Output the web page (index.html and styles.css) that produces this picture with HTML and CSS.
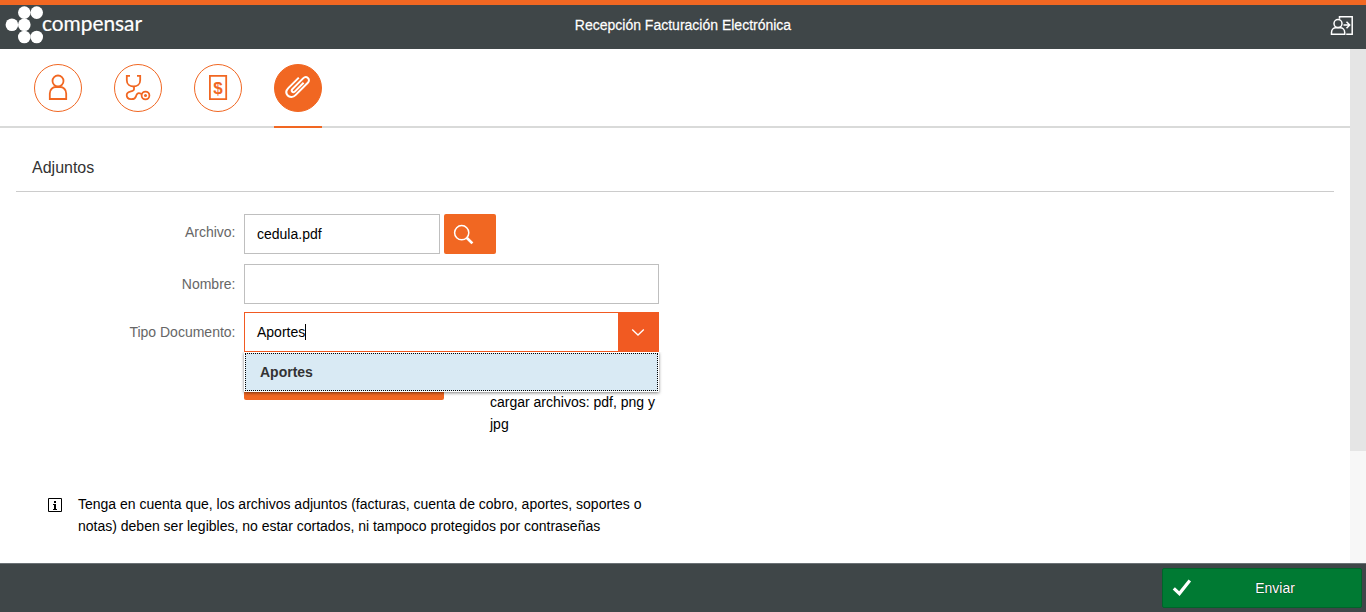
FILE: index.html
```html
<!DOCTYPE html>
<html lang="es">
<head>
<meta charset="utf-8">
<title>Recepción Facturación Electrónica</title>
<link rel="stylesheet" href="styles.css">
</head>
<body>
<header class="header">
  <svg class="logo" width="150" height="44" viewBox="0 5 150 44">
    <g fill="#fff"><circle cx="24.3" cy="12.6" r="6.3"/><circle cx="36.700" cy="12.6" r="6.3"/><circle cx="11.9" cy="24.800" r="6.3"/><circle cx="24.3" cy="24.800" r="6.3"/><circle cx="24.3" cy="37" r="6.3"/><circle cx="36.700" cy="37" r="6.3"/></g>
    <text class="logo-text" x="42" y="30.500" textLength="100" lengthAdjust="spacingAndGlyphs">compensar</text>
  </svg>
  <h1 class="header-title">Recepción Facturación Electrónica</h1>
  <svg class="logout" width="24" height="20" viewBox="0 0 24 20" fill="none" stroke="#fff" stroke-width="1.5">
    <circle cx="8" cy="7.600" r="4"/><path d="M1.500 18.200v-1.700c0-3 2.200-4.800 4.400-4.800h4.400c2.200 0 4.400 1.800 4.400 4.800v1.700z"/><path d="M9.500 2.800V.8h12.700v17.400h-6"/><path d="M13.500 9h6M16.500 5.800L19.700 9l-3.200 3.200"/>
  </svg>
</header>
<div class="viewport">
  <main class="content">
    <nav class="tabs">
      <div class="tab"><svg class="tab-icon" viewBox="1 1 46 46"><circle cx="24" cy="17" r="5.500"/><path d="M15.800 35v-5.500c0-4 3-6.500 6-6.500h4.400c3 0 6 2.500 6 6.500V35z"/></svg></div>
      <div class="tab"><svg class="tab-icon" viewBox="1 1 46 46"><path d="M16 11.800h-3.200v4.500c0 4 3 6.200 6.700 6.200s6.700-2.200 6.700-6.200v-4.500H23"/><path d="M20 22.500v2.700c0 3.200-7.300.8-7.300 5.800 0 5.500 8.300 5.200 9.300 1.200.8-3.200 2.500-3.800 5.500-2.200"/><circle cx="31.500" cy="31.500" r="3.900"/><circle class="solid" cx="31.500" cy="31.500" r="1.500"/></svg></div>
      <div class="tab"><svg class="tab-icon" viewBox="1 1 46 46"><path d="M15.900 11.900h16.300v23.200H15.900z"/><text class="dollar" x="24" y="29.600">$</text></svg></div>
      <div class="tab active"><svg class="tab-icon" viewBox="1 1 46 46"><path d="M24.800 13.600L14.500 23.900c-2.600 2.600-2.600 5.600-.8 7.600s5.400 2 7.800-.4L33.800 18.800c1.600-1.600 1.400-3.700.1-4.800-1.400-1.200-3.400-1-4.800.4L18.500 25c-1 1-.9 2-.2 2.700s1.800.6 2.700-.3l8.600-8.600"/></svg></div>
    </nav>
    <section class="panel">
      <h2 class="panel-title">Adjuntos</h2>
      <div class="form">
        <div class="row">
          <label class="label">Archivo:</label>
          <div class="field file">cedula.pdf</div>
          <button class="search"><svg width="22" height="22" viewBox="0 0 22 22" fill="none" stroke="#fff"><circle cx="8.700" cy="8.700" r="7.100" stroke-width="1.500"/><path d="M13.700 13.700l5.700 5.700" stroke-width="2.700"/></svg></button>
        </div>
        <div class="row name-row">
          <label class="label low">Nombre:</label>
          <div class="field"></div>
        </div>
        <div class="row">
          <label class="label type">Tipo Documento:</label>
          <div class="combo">
            <div class="combo-value">Aportes<span class="caret"></span></div>
            <div class="combo-arrow"><svg width="14" height="8" viewBox="0 0 14 8" fill="none" stroke="#fff" stroke-width="1.300"><path d="M1.200 1.500L7 7 12.800 1.500"/></svg></div>
            <div class="options"><div class="option">Aportes</div></div>
          </div>
        </div>
        <div class="upload-row">
          <div class="upload"></div>
          <p class="hint">cargar archivos: pdf, png y jpg</p>
        </div>
      </div>
      <div class="notice">
        <svg class="info" width="14" height="14" viewBox="0 0 14 14"><path d="M.5.5h13v13H.5z" fill="none" stroke="#000"/><path d="M6 3h2v2H6zM5 6h3v5h1v1H5v-1h1V7H5z"/></svg>
        <p class="notice-text">Tenga en cuenta que, los archivos adjuntos (facturas, cuenta de cobro, aportes, soportes o notas) deben ser legibles, no estar cortados, ni tampoco protegidos por contraseñas</p>
      </div>
    </section>
  </main>
  <div class="scrollbar"><div class="thumb"></div></div>
</div>
<footer class="footer">
  <button class="send"><svg width="20" height="18" viewBox="0 0 20 18" fill="none" stroke="#fff" stroke-width="3.200"><path d="M1.800 9.300l5.600 5.300L17.800 1.500"/></svg><span class="send-text">Enviar</span></button>
</footer>
</body>
</html>
```

FILE: styles.css
```css
* { box-sizing: border-box; }
body { margin: 0; height: 612px; overflow: hidden; display: flex; flex-direction: column; background: #fff; color: #000; font: 14px/22px "Liberation Sans", Arial, sans-serif; }
h1, h2, p { margin: 0; font-weight: normal; }
button { border: 0; margin: 0; padding: 0; font: inherit; color: #fff; }
.header { height: 49px; flex: none; border-top: 5px solid #f16722; background: #3f4648; color: #fff; display: grid; grid-template-columns: 1fr auto 1fr; }
.logo-text { font: 21px Lato, sans-serif; fill: #fff; stroke: #fff; stroke-width: .2px; }
.header-title { font-size: 14px; line-height: 41px; -webkit-text-stroke: .3px #fff; text-shadow: 0 0 1px #000; }
.logout { justify-self: end; margin: 11px 12px 0 0; }
.viewport { height: 514px; flex: none; display: flex; }
.content { flex: 1; overflow: hidden; }
.scrollbar { width: 16px; background: #f7f7f7; }
.thumb { height: 402px; background: #e5e5e5; }
.tabs { height: 79px; padding: 15px 34px 0; display: flex; gap: 32px; border-bottom: 2px solid #d9dad9; }
.tab { width: 48px; height: 64px; color: #f16722; }
.tab-icon { display: block; width: 48px; height: 48px; border: 1px solid #f16722; border-radius: 50%; fill: none; stroke: currentColor; stroke-width: 1.8; }
.solid { fill: currentColor; stroke: none; }
.dollar { font: bold 17px "Liberation Sans", sans-serif; text-anchor: middle; fill: currentColor; stroke: none; }
.active { border-bottom: 2px solid #f16722; }
.active .tab-icon { background: #f16722; color: #fff; stroke-width: 2; }
.panel { padding: 0 16px; }
.panel-title { height: 64px; padding: 18px 16px 0; border-bottom: 1px solid #ccc; font-size: 16px; line-height: 44px; color: #333; }
.form { padding-top: 22px; width: 643px; }
.row { display: flex; height: 40px; }
.name-row { margin: 10px 0 8px; }
.label { width: 219.5px; margin-right: 8.5px; flex: none; text-align: right; line-height: 36px; color: #666; }
.low { line-height: 40px; }
.type { line-height: 40px; }
.field { flex: 1; border: 1px solid #bfbfbf; padding-left: 12px; line-height: 38px; }
.file { flex: 0 0 196px; }
.search { width: 52px; margin-left: 4px; padding: 1px 0 0 9px; border-radius: 2px; background: #f16722; text-align: left; }
.search svg { display: block; }
.combo { flex: 1; display: flex; position: relative; border: 1px solid #f15a22; }
.combo-value { flex: 1; padding-left: 12px; line-height: 38px; }
.caret { display: inline-block; width: 1px; height: 16px; background: #000; vertical-align: -3px; }
.combo-arrow { width: 40px; background: #f15a22; display: flex; align-items: center; justify-content: center; }
.options { position: absolute; left: -1px; top: 39px; width: 415px; height: 40px; padding: 1px; background: #fff; box-shadow: 0 1px 3px rgba(0,0,0,.5); clip-path: inset(0 -5px -5px -5px); }
.option { height: 38px; border: 1px dotted #000; background: #d9eaf4; padding-left: 14px; font-weight: bold; line-height: 36px; color: #333; }
.upload-row { display: flex; height: 88px; }
.upload { width: 200px; height: 40px; margin: 8px 46px 0 228px; border-radius: 2px; background: #f16722; flex: none; }
.hint { padding-top: 39px; }
.notice { display: flex; width: 650px; padding: 53px 0 0 32px; }
.info { flex: none; margin: 5px 16px 0 0; }
.notice-text { flex: 1; }
.footer { height: 49px; flex: none; display: flex; justify-content: flex-end; border-top: 1px solid #6a7175; background: #3f4648; padding: 4px 4px 4px 0; }
.send { width: 200px; height: 40px; padding-left: 9px; display: flex; align-items: center; background: #007a33; border: 1px solid #00642a; border-radius: 2px; }
.send-text { flex: 1; text-align: center; padding-right: 3px; text-shadow: 0 0 1px #000; }
```
